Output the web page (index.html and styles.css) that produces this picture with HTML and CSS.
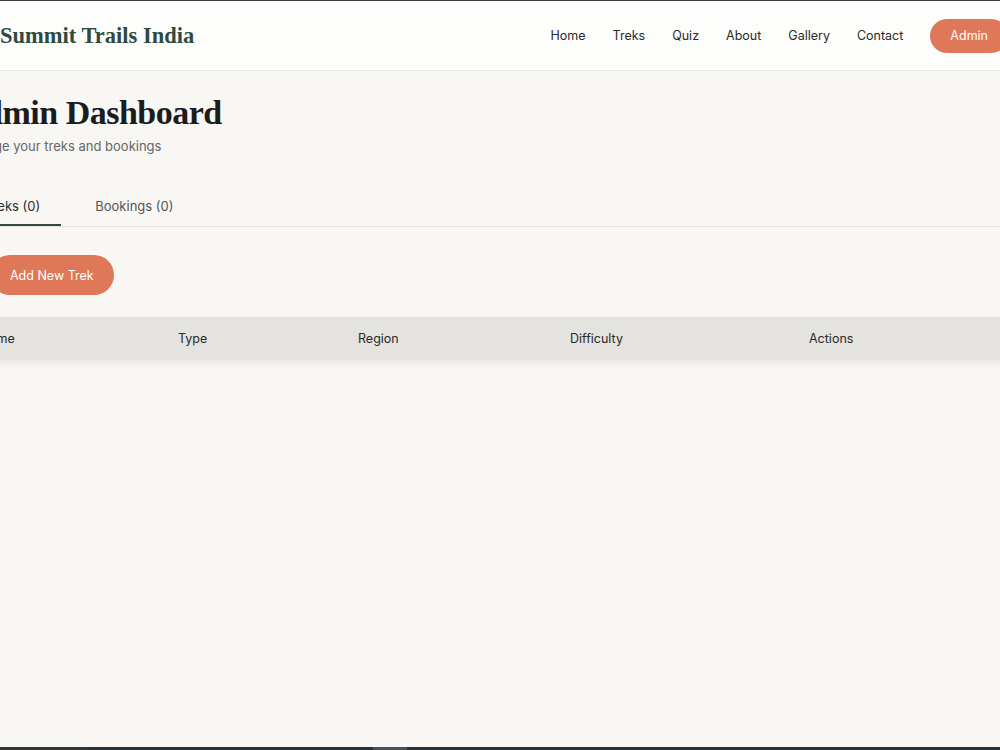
FILE: index.html
```html
<!DOCTYPE html>
<html lang="en">
  <head>
    <meta charset="UTF-8" />
    <meta name="viewport" content="width=device-width, initial-scale=1.0" />
    <title>Admin Dashboard - Summit Trails India</title>
    <link rel="stylesheet" href="styles.css">
  </head>
  <body>
    <div class="page">
      <header class="site-header">
        <a class="logo" href="#">Summit Trails India</a>
        <nav class="main-nav">
          <ul>
            <li><a href="#">Home</a></li>
            <li><a href="#">Treks</a></li>
            <li><a href="#">Quiz</a></li>
            <li><a href="#">About</a></li>
            <li><a href="#">Gallery</a></li>
            <li><a href="#">Contact</a></li>
          </ul>
          <a class="btn btn-admin" href="#">Admin</a>
        </nav>
      </header>

      <main class="dashboard">
        <h1>Admin Dashboard</h1>
        <p class="subtitle">Manage your treks and bookings</p>

        <div class="tabs">
          <button class="tab active">Treks (0)</button>
          <button class="tab">Bookings (0)</button>
        </div>

        <div class="toolbar">
          <button class="btn btn-add">Add New Trek</button>
        </div>

        <div class="table-wrap">
          <table class="treks-table">
            <thead>
              <tr>
                <th class="col-name">Name</th>
                <th class="col-type">Type</th>
                <th class="col-region">Region</th>
                <th class="col-difficulty">Difficulty</th>
                <th>Actions</th>
              </tr>
            </thead>
            <tbody></tbody>
          </table>
        </div>
      </main>

      <footer class="site-footer">
        <div class="footer-inner">
          <span class="footer-block"></span>
          <span class="footer-block small"></span>
        </div>
      </footer>
    </div>
  </body>
</html>
```

FILE: styles.css
```css
:root {
  --accent: #de7858;
  --green: #2f4a3f;
  --bg: #f8f7f4;
  --text-color: #1f1f1f;
}

html {
  box-sizing: border-box;
}

*,
*::before,
*::after {
  box-sizing: border-box;
}

body {
  margin: 0;
  overflow-x: hidden;
  background-color: var(--bg);
  color: var(--text-color);
  font-family: Inter, "Liberation Sans", sans-serif;
}

ul {
  list-style: none;
  padding: 0;
  margin: 0;
}

a {
  text-decoration: none;
  color: inherit;
}

button {
  font-family: inherit;
  border: none;
  background: none;
  cursor: pointer;
}

.page {
  width: 1090px;
  margin-left: -40px;
}

/* header */
.site-header {
  display: flex;
  align-items: center;
  justify-content: space-between;
  height: 71px;
  padding: 0 42px 0 40px;
  background-color: #fdfdfc;
  border-top: 1px solid #3a3a3a;
  border-bottom: 1px solid #ebeae6;
}

.logo {
  font-family: "Liberation Serif", serif;
  font-weight: bold;
  font-size: 22.5px;
  color: var(--green);
  margin-top: 1px;
}

.main-nav {
  display: flex;
  align-items: center;
}

.main-nav ul {
  display: flex;
  gap: 27px;
  margin-right: 27px;
  margin-bottom: 4px;
}

.main-nav ul a {
  font-size: 12.5px;
  color: #2a2a2a;
}

.btn {
  display: inline-flex;
  align-items: center;
  border-radius: 999px;
  background-color: var(--accent);
  color: #fff;
}

.btn-admin {
  height: 34px;
  padding: 0 20px;
  font-size: 12.5px;
}

/* dashboard */
.dashboard {
  min-height: 676px;
  padding-top: 22px;
}

.dashboard h1 {
  margin: 0;
  font-family: "Liberation Serif", serif;
  font-size: 34px;
  line-height: 1.2;
  letter-spacing: -0.5px;
  color: #1c1c1c;
}

.subtitle {
  margin: 2px 0 0;
  font-size: 13px;
  line-height: 21px;
  color: #666;
}

.tabs {
  display: flex;
  gap: 9px;
  margin-top: 25px;
  border-bottom: 1px solid #e4e3df;
}

.tab {
  padding: 14px 21px 7px 25px;
  font-size: 13px;
  line-height: 21px;
  color: #555;
  border-bottom: 2px solid transparent;
}

.tab.active {
  color: #2a2a2a;
  border-bottom-color: var(--green);
}

.toolbar {
  margin-top: 28px;
  padding-left: 30px;
}

.btn-add {
  height: 40px;
  padding: 1px 20px 0;
  font-size: 12.5px;
}

.table-wrap {
  margin-top: 22px;
  box-shadow: 0 3px 8px rgba(0, 0, 0, 0.07);
}

.treks-table {
  width: 100%;
  border-collapse: collapse;
}

.treks-table th {
  height: 43px;
  padding: 0 20px;
  text-align: left;
  font-size: 12.5px;
  font-weight: normal;
  color: #2a2a2a;
  background-color: #e4e3df;
}

.col-name {
  width: 198px;
}

.col-type {
  width: 180px;
}

.col-region {
  width: 212px;
}

.col-difficulty {
  width: 239px;
}

/* footer */
.site-footer {
  height: 60px;
  background-color: #263236;
}

.footer-inner {
  display: flex;
  padding-left: 40px;
}

.footer-block {
  width: 88px;
  height: 3px;
  background-color: #333;
}

.footer-block.small {
  width: 34px;
  margin-left: 285px;
  background-color: #4a5053;
}
```
